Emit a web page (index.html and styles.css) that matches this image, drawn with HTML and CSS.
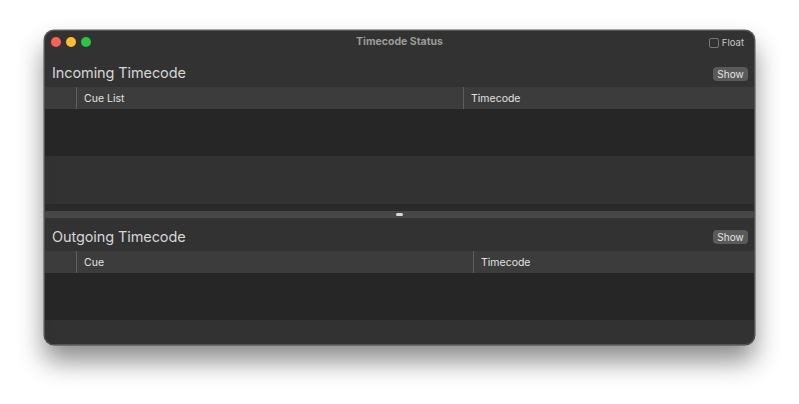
FILE: index.html
```html
<!DOCTYPE html>
<html>
<head>
<meta charset="utf-8">
<link rel="stylesheet" href="styles.css">
</head>
<body>
<div class="window">
  <div class="titlebar">
    <div class="lights">
      <span class="light red"></span>
      <span class="light yellow"></span>
      <span class="light green"></span>
    </div>
    <div class="title">Timecode Status</div>
    <label class="float"><span class="check"></span><span>Float</span></label>
  </div>

  <div class="section top">
    <div class="section-head">
      <span class="section-title">Incoming Timecode</span>
      <span class="btn">Show</span>
    </div>
    <div class="table-head">
      <div class="col-blank"></div>
      <div class="col col-a1">Cue List</div>
      <div class="col col-b">Timecode</div>
    </div>
    <div class="row dark"></div>
    <div class="row light"></div>
    <div class="row-gap"></div>
  </div>

  <div class="splitter"><span class="handle"></span></div>

  <div class="section bottom">
    <div class="section-head">
      <span class="section-title">Outgoing Timecode</span>
      <span class="btn">Show</span>
    </div>
    <div class="table-head">
      <div class="col-blank"></div>
      <div class="col col-a2">Cue</div>
      <div class="col col-b">Timecode</div>
    </div>
    <div class="row dark"></div>
    <div class="row light last"></div>
  </div>
</div>
</body>
</html>
```

FILE: styles.css
```css
html, body {
  margin: 0;
  padding: 0;
  background: #ffffff;
}
body {
  padding: 30px 0 60px 44px;
  font-family: Inter, "Noto Sans", "Liberation Sans", sans-serif;
}
.window {
  width: 711px;
  height: 315px;
  box-sizing: border-box;
  background: #323232;
  border-radius: 10px;
  overflow: hidden;
  border: 1px solid #545454;
  box-shadow: 0 16px 26px rgba(0,0,0,0.45), 0 0 0 0.5px rgba(0,0,0,0.6);
  display: flex;
  flex-direction: column;
}
.titlebar {
  height: 21px;
  display: flex;
  align-items: center;
  position: relative;
  flex: none;
}
.lights {
  display: flex;
  gap: 5px;
  padding-left: 6px;
  padding-top: 1px;
}
.light {
  width: 10px;
  height: 10px;
  border-radius: 50%;
  display: block;
}
.red { background: #fe5f57; }
.yellow { background: #febc2e; }
.green { background: #28c840; }
.title {
  position: absolute;
  left: 0;
  right: 0;
  text-align: center;
  font-size: 10.5px;
  font-weight: 700;
  color: #9b9b9b;
  top: 4px;
}
.float {
  margin-left: auto;
  margin-right: 10px;
  display: flex;
  align-items: center;
  gap: 3px;
  font-size: 9.5px;
  color: #c6c6c6;
  padding-top: 2px;
}
.check {
  width: 8px;
  height: 8px;
  border: 1px solid #777777;
  border-radius: 2px;
  display: block;
}
.section {
  display: flex;
  flex-direction: column;
  flex: none;
}
.section-head {
  height: 35px;
  box-sizing: border-box;
  display: flex;
  align-items: center;
  padding: 6px 6px 0 7px;
}
.bottom .section-head {
  height: 33px;
  padding-top: 3px;
}
.section-title {
  font-size: 14.5px;
  color: #d6d6d6;
  letter-spacing: -0.1px;
}
.btn {
  margin-left: auto;
  width: 35px;
  height: 14px;
  line-height: 14px;
  text-align: center;
  border-radius: 4px;
  background: #5a5a5a;
  color: #e4e4e4;
  font-size: 10px;
  margin-top: 2px;
}
.table-head {
  height: 22px;
  background: #3c3c3c;
  display: flex;
  align-items: stretch;
}
.col-blank {
  width: 31px;
  border-right: 1px solid #5e5e5e;
  flex: none;
}
.col {
  display: flex;
  align-items: center;
  font-size: 10.5px;
  color: #e2e2e2;
  padding-left: 7px;
  box-sizing: border-box;
}
.col-a1 {
  width: 387px;
  border-right: 1px solid #5e5e5e;
}
.col-a2 {
  width: 397px;
  border-right: 1px solid #5e5e5e;
}
.col-b {
  flex: 1;
}
.row {
  height: 47px;
}
.row.dark {
  background: #262626;
}
.row.light {
  background: #313131;
  height: 48px;
}
.row.last {
  height: 40px;
}
.row-gap {
  height: 7px;
  background: #2a2a2a;
}
.splitter {
  height: 7px;
  background: #474747;
  display: flex;
  align-items: center;
  justify-content: center;
  flex: none;
}
.handle {
  width: 7px;
  height: 3px;
  border-radius: 2px;
  background: #d8d8d8;
  display: block;
}
```
